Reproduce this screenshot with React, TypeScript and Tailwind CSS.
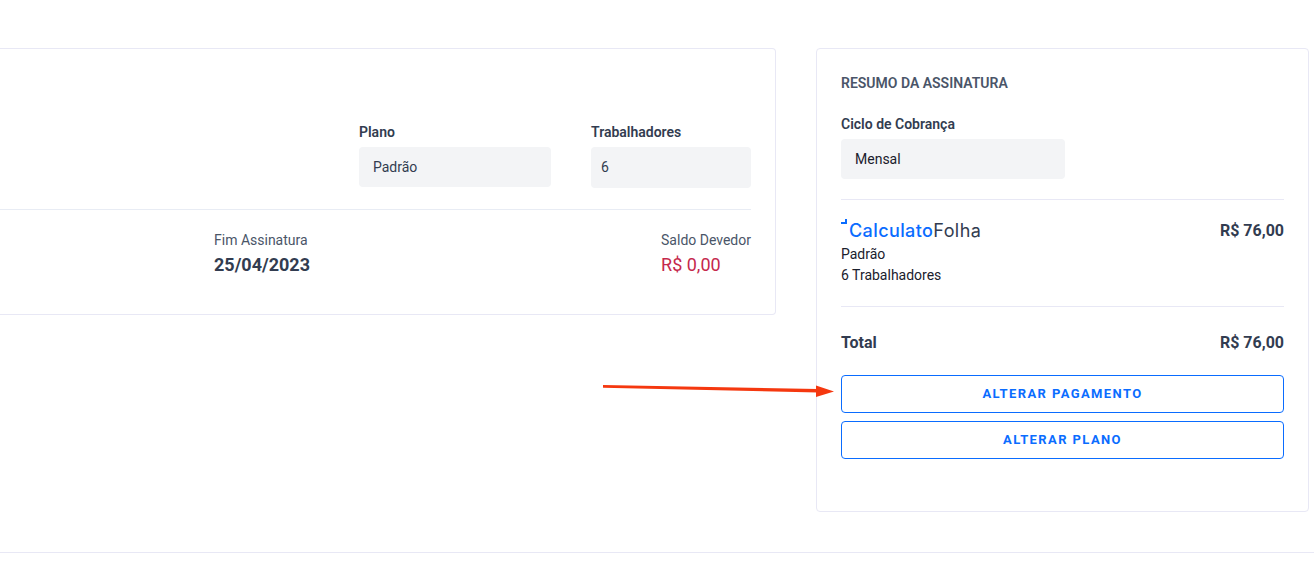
export default function App() {
  return (
    <div className="relative w-[1314px] h-[561px] overflow-hidden bg-white font-['Roboto',sans-serif] text-[#323c50]">
      <div className="h-[553px] border-b border-[#e8e8f5] flex items-start pt-[48px]">
        <div className="w-[776px] h-[267px] bg-white border border-[#e8e8f5] border-l-0 rounded-r-[4px] flex flex-col">
          <div className="h-[161px] mr-[24px] border-b border-[#e8ecf4] flex justify-end items-start pt-[75px] gap-[40px]">
            <div className="w-[192px]">
              <div className="text-[14px] font-semibold leading-[16px] h-[23px]">Plano</div>
              <div className="h-[40px] bg-[#f3f4f6] rounded-[4px] pl-[14px] flex items-center text-[14px]">Padrão</div>
            </div>
            <div className="w-[160px]">
              <div className="text-[14px] font-semibold leading-[16px] h-[23px]">Trabalhadores</div>
              <div className="h-[41px] bg-[#f3f4f6] rounded-[4px] pl-[10px] flex items-center text-[14px]">6</div>
            </div>
          </div>
          <div className="flex justify-between pl-[214px] pr-[24px] pt-[21px]">
            <div>
              <div className="text-[14px] leading-[18px] text-[#4a5568]">Fim Assinatura</div>
              <div className="text-[18px] font-bold leading-[26px] mt-[3px]">25/04/2023</div>
            </div>
            <div>
              <div className="text-[14px] leading-[18px] text-[#4a5568]">Saldo Devedor</div>
              <div className="text-[18px] leading-[26px] mt-[3px] text-[#c5284c]">R$ 0,00</div>
            </div>
          </div>
        </div>
        <div className="ml-[40px] w-[493px] h-[464px] border border-[#e8e8f5] rounded-[4px] px-[24px] pt-[26px]">
          <div className="text-[14px] font-semibold text-[#4a5568] leading-[16px]">RESUMO DA ASSINATURA</div>
          <div className="text-[14px] font-semibold leading-[16px] mt-[25px]">Ciclo de Cobrança</div>
          <div className="mt-[7px] w-[224px] h-[40px] bg-[#f3f4f6] rounded-[4px] pl-[14px] flex items-center text-[14px] text-[#1a202c]">Mensal</div>
          <div className="mt-[20px] border-t border-[#e8e8f5] pt-[19px] flex justify-between h-[107px]">
            <div>
              <div className="relative pl-[8px] h-[24px] text-[18px] leading-[24px] tracking-[0.4px] font-['Inter',sans-serif] font-medium text-[#0a6cff]">
                <span className="absolute left-0 top-0 w-[6px] h-[5px] border-r-2 border-b-2 border-[#0a6cff]" />
                Calculato<span className="text-[#323c50] font-normal">Folha</span>
              </div>
              <div className="text-[14px] leading-[21px] mt-[1px] text-[#1a202c]">Padrão</div>
              <div className="text-[14px] leading-[21px] text-[#1a202c]">6 Trabalhadores</div>
            </div>
            <div className="text-[16px] font-bold leading-[24px]">R$ 76,00</div>
          </div>
          <div className="border-t border-[#e8e8f5] pt-[25px] flex justify-between text-[16px] font-bold leading-[22px]">
            <span>Total</span><span>R$ 76,00</span>
          </div>
          <button className="mt-[21px] w-full h-[38px] border border-[#0a6cff] rounded-[4px] text-[13px] font-bold tracking-[1.4px] text-[#0a6cff]">ALTERAR PAGAMENTO</button>
          <button className="mt-[8px] w-full h-[38px] border border-[#0a6cff] rounded-[4px] text-[13px] font-bold tracking-[1.4px] text-[#0a6cff]">ALTERAR PLANO</button>
        </div>
      </div>
      <svg className="absolute left-[600px] top-[380px]" width="240" height="20" viewBox="0 0 240 20">
        <path d="M3 5 L218 9 L218 12.5 L3 7.8 Z" fill="#f5380f" />
        <path d="M216 5.5 L234 11.5 L216 17 Z" fill="#f5380f" />
      </svg>
    </div>
  );
}
